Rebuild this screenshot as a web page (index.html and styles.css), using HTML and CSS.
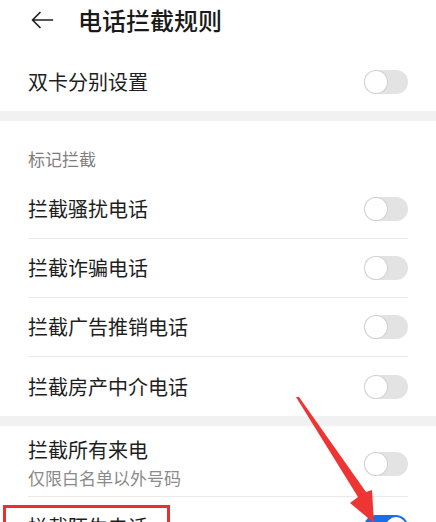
FILE: index.html
```html
<!DOCTYPE html>
<html lang="zh-CN">
<head>
<meta charset="utf-8">
<title>电话拦截规则</title>
<link rel="stylesheet" href="styles.css">
</head>
<body>
<div class="page">
  <header class="header">
    <svg class="back" viewBox="0 0 24 24" width="24" height="24" aria-hidden="true">
      <path d="M2.5 12H22.5M10 4.5L2.5 12L10 19.5" fill="none" stroke="#222" stroke-width="1.7" stroke-linecap="round" stroke-linejoin="round"/>
    </svg>
    <h1 class="title">电话拦截规则</h1>
  </header>

  <section class="group">
    <div class="row"><span class="label">双卡分别设置</span><span class="toggle"></span></div>
  </section>

  <div class="band"></div>

  <section class="group">
    <div class="subhead">标记拦截</div>
    <div class="row divided"><span class="label">拦截骚扰电话</span><span class="toggle"></span></div>
    <div class="row divided"><span class="label">拦截诈骗电话</span><span class="toggle"></span></div>
    <div class="row divided"><span class="label">拦截广告推销电话</span><span class="toggle"></span></div>
    <div class="row last"><span class="label">拦截房产中介电话</span><span class="toggle"></span></div>
  </section>

  <div class="band"></div>

  <section class="group">
    <div class="row tall divided">
      <div class="texts">
        <span class="label">拦截所有来电</span>
        <span class="sub">仅限白名单以外号码</span>
      </div>
      <span class="toggle"></span>
    </div>
    <div class="row"><span class="label">拦截陌生电话</span><span class="toggle on"></span></div>
  </section>

  <div class="highlight"></div>
  <svg class="arrow" viewBox="0 0 436 522" width="436" height="522" aria-hidden="true">
    <polygon points="296,397 299,397 366,492 372,490 374,523 350,503 358,497" fill="#ef3434"/>
  </svg>
</div>
</body>
</html>
```

FILE: styles.css
```css
* { box-sizing: border-box; }

html, body {
  margin: 0;
  padding: 0;
  background: #ffffff;
}

body {
  font-family: "Noto Sans CJK SC", "Noto Sans", sans-serif;
  color: #1c1c1c;
  overflow: hidden;
}

.page {
  position: relative;
  width: 436px;
  height: 522px;
  overflow: hidden;
}

.header {
  height: 40px;
  margin-bottom: 12px;
  display: flex;
  align-items: center;
  padding-left: 30px;
  gap: 24px;
}

.back { display: block; flex: none; }

.title {
  margin: 0;
  font-size: 24px;
  font-weight: 500;
  line-height: 30px;
  color: #1a1a1a;
}

.group {
  padding: 0 28px;
}

.row {
  height: 59px;
  display: flex;
  align-items: center;
  justify-content: space-between;
}

.row.divided {
  height: 59px;
  border-bottom: 1px solid #e9e9e9;
}

.row.last { height: 59px; }

.row.tall {
  height: 71px;
  align-items: stretch;
  padding: 11px 0 8px;
}

.row.tall .toggle { align-self: center; margin-top: 2px; }

.texts {
  display: flex;
  flex-direction: column;
  gap: 4px;
}

.label {
  font-size: 20px;
  line-height: 26px;
  color: #1e1e1e;
}

.sub {
  font-size: 17px;
  line-height: 22px;
  color: #8a8a8a;
}

.subhead {
  height: 59px;
  padding-top: 26px;
  font-size: 17px;
  line-height: 24px;
  color: #7e7e7e;
}

.band {
  height: 10px;
  background: #f1f1f1;
}

.toggle {
  position: relative;
  flex: none;
  width: 44px;
  height: 24px;
  border-radius: 12px;
  background: #e3e3e3;
}

.toggle::after {
  content: "";
  position: absolute;
  top: 1px;
  left: 1px;
  width: 22px;
  height: 22px;
  border-radius: 50%;
  background: #ffffff;
  box-shadow: 0 0 0 1px #d2d2d2;
}

.toggle.on {
  background: #1a6ee6;
}

.toggle.on::after {
  left: auto;
  right: 2px;
  top: 2px;
  width: 20px;
  height: 20px;
  box-shadow: none;
}

.highlight {
  position: absolute;
  left: 3px;
  top: 505px;
  width: 167px;
  height: 40px;
  border: 3.5px solid #e8302f;
}

.arrow {
  position: absolute;
  left: 0;
  top: 0;
  pointer-events: none;
}
```
